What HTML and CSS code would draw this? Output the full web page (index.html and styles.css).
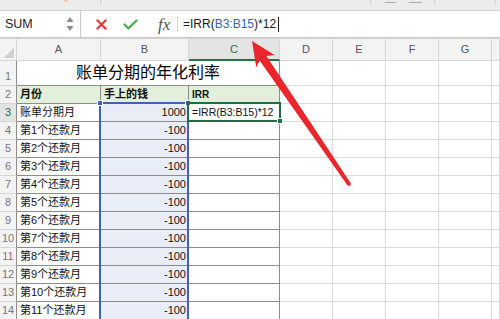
FILE: index.html
```html
<!DOCTYPE html>
<html lang="zh-CN">
<head>
  <meta charset="UTF-8" />
  <title>账单分期的年化利率</title>
  <link rel="stylesheet" href="styles.css">
</head>
<body>

  <div class="toolbar">
    <span class="tb-dot"></span>
    <span class="tb-sep s1"></span>
    <span class="tb-sep s2"></span>
    <span class="tb-dash d1"></span>
    <span class="tb-dash d2"></span>
    <span class="tb-sep s3"></span>
    <span class="tb-sep s4"></span>
  </div>

  <div class="formula-bar">
    <div class="name-box">
      <span>SUM</span>
      <svg class="spin" width="8" height="16" viewBox="0 0 8 16">
        <path d="M4 1 L7.5 6 L0.5 6 Z" fill="#8a8a8a"/>
        <path d="M4 15 L7.5 10 L0.5 10 Z" fill="#8a8a8a"/>
      </svg>
    </div>
    <div class="fb-tools">
      <svg class="x-icon" width="11" height="11" viewBox="0 0 11 11">
        <path d="M1.5 1.5 L9.5 9.5 M9.5 1.5 L1.5 9.5" stroke="#e0403a" stroke-width="2.4" stroke-linecap="round"/>
      </svg>
      <svg class="check-icon" width="15" height="11" viewBox="0 0 15 11">
        <path d="M1.5 5.5 L5.5 9.3 L13.5 1.5" stroke="#4fae57" stroke-width="2.4" fill="none" stroke-linecap="round" stroke-linejoin="round"/>
      </svg>
      <span class="fx">fx</span>
    </div>
    <div class="formula">=IRR(<span class="ref">B3:B15</span>)*12<span class="caret"></span></div>
  </div>

  <div class="sheet">
    <div class="row col-head">
      <div class="cell corner"><span class="tri"></span></div>
      <div class="cell">A</div>
      <div class="cell">B</div>
      <div class="cell active">C</div>
      <div class="cell">D</div>
      <div class="cell">E</div>
      <div class="cell">F</div>
      <div class="cell">G</div>
      <div class="cell"></div>
    </div>

    <div class="row title-row">
      <div class="cell rh">1</div>
      <div class="cell t title">账单分期的年化利率</div>
      <div class="cell"></div>
      <div class="cell"></div>
      <div class="cell"></div>
      <div class="cell"></div>
      <div class="cell"></div>
    </div>

    <div class="row">
      <div class="cell rh">2</div>
      <div class="cell t hd">月份</div>
      <div class="cell t hd">手上的钱</div>
      <div class="cell t hd small">IRR</div>
      <div class="cell"></div>
      <div class="cell"></div>
      <div class="cell"></div>
      <div class="cell"></div>
      <div class="cell"></div>
    </div>

    <div class="row">
      <div class="cell rh active">3</div>
      <div class="cell t">账单分期月</div>
      <div class="cell t num in-range">1000</div>
      <div class="cell t edit">=IRR(B3:B15)*12</div>
      <div class="cell"></div>
      <div class="cell"></div>
      <div class="cell"></div>
      <div class="cell"></div>
      <div class="cell"></div>
    </div>

    <div id="paymentRows"></div>

    <div class="range">
      <span class="handle blue tl"></span>
      <span class="handle blue tr"></span>
    </div>
    <div class="selected">
      <span class="handle green br"></span>
    </div>
  </div>

  <svg class="arrow" width="500" height="319" viewBox="0 0 500 319">
    <polygon points="252,41 274.5,55 266.4,56 350.6,183 347.4,185.2 259.6,60.4 256.3,67.5" fill="#e8262b"/>
    <circle cx="349" cy="184.1" r="1.8" fill="#e8262b"/>
  </svg>

  <script>
    // rows 4..14: 第N个还款月, -100
    const rowsBox = document.getElementById("paymentRows");
    for (let n = 1; n <= 11; n++) {
      const row = document.createElement("div");
      row.className = "row";
      row.innerHTML =
        `<div class="cell rh">${n + 3}</div>` +
        `<div class="cell t">第${n}个还款月</div>` +
        `<div class="cell t num in-range">-100</div>` +
        `<div class="cell t"></div>` +
        `<div class="cell"></div><div class="cell"></div>` +
        `<div class="cell"></div><div class="cell"></div><div class="cell"></div>`;
      rowsBox.appendChild(row);
    }
  </script>
</body>
</html>
```

FILE: styles.css
```css
* {
  margin: 0;
  padding: 0;
  box-sizing: border-box;
}

body {
  width: 500px;
  height: 319px;
  overflow: hidden;
  position: relative;
  background: #fff;
  font-family: "Liberation Sans", "Noto Sans CJK SC", sans-serif;
  color: #111;
}

/* top toolbar strip */
.toolbar {
  height: 11px;
  background: #ececec;
  border-bottom: 1px solid #cdcdcd;
  display: flex;
  align-items: flex-start;
}

.tb-dot {
  width: 4px;
  height: 2px;
  margin-left: 64px;
  background: #f2c9a0;
  border-radius: 2px;
}

.tb-sep {
  width: 1px;
  height: 5px;
  background: #cfcfcf;
}

.tb-sep.s1 { margin-left: 32px; }
.tb-sep.s2 { margin-left: 269px; }
.tb-sep.s3 { margin-left: 12px; }
.tb-sep.s4 { margin-left: 60px; }

.tb-dash {
  height: 1px;
  margin-top: 2px;
  background: #a9a9a9;
}

.tb-dash.d1 { width: 11px; margin-left: 14px; }
.tb-dash.d2 { width: 13px; margin-left: 13px; }

/* formula bar */
.formula-bar {
  height: 27px;
  display: flex;
  border-bottom: 1px solid #c8c8c8;
}

.name-box {
  width: 81px;
  border-right: 1px solid #c9c9c9;
  display: flex;
  align-items: center;
  padding-left: 5px;
  font-size: 12.5px;
  color: #222;
}

.spin {
  margin-left: auto;
  margin-right: 6px;
}

.fb-tools {
  width: 97px;
  margin: 5px 0;
  border-right: 1px solid #d2d2d2;
  display: flex;
  align-items: center;
  padding-left: 15px;
}

.check-icon {
  margin-left: 16px;
}

.fx {
  margin-left: 20px;
  font-family: "Liberation Serif", serif;
  font-style: italic;
  font-size: 17px;
  color: #555;
  line-height: 1;
}

.formula {
  display: flex;
  align-items: center;
  padding-left: 5px;
  font-size: 12px;
  color: #1a1a1a;
}

.formula .ref {
  color: #3a62b8;
}

.caret {
  width: 1px;
  height: 15px;
  margin-left: 2px;
  background: #222;
}

/* sheet grid */
.sheet {
  position: relative;
  height: 281px;
  overflow: hidden;
  border-top: 1px solid #d4d4d4;
}

.row {
  display: grid;
  grid-template-columns: 17px 84px 88px 91px 53px 53px 53px 53px 1fr;
  height: 18px;
}

.cell {
  border-right: 1px solid #dadada;
  border-bottom: 1px solid #dadada;
  font-size: 11px;
  line-height: 17px;
  padding: 0 3px;
  white-space: nowrap;
  overflow: hidden;
}

.cell.t {
  border-color: #8c8c8c;
}

.col-head {
  height: 22px;
  background: #f3f3f3;
}

.col-head .cell {
  border-color: #d6d6d6;
  text-align: center;
  line-height: 21px;
  color: #555;
}

.col-head .cell.active {
  background: #e4e4e4;
  color: #217346;
  border-bottom: 2px solid #217346;
}

.corner {
  display: flex;
  align-items: flex-end;
  justify-content: flex-end;
  padding: 2px;
}

.tri {
  width: 10px;
  height: 10px;
  background: linear-gradient(135deg, transparent 50%, #d2d2d2 50%);
}

.rh {
  background: #f3f3f3;
  color: #777;
  text-align: center;
  padding: 0;
  border-bottom-color: #d6d6d6;
  border-right-color: #8c8c8c;
}

.rh.active {
  color: #217346;
  background: #e4e4e4;
}

.title-row {
  height: 25px;
}

.title-row .rh {
  line-height: 30px;
}

.title {
  grid-column: span 3;
  text-align: center;
  font-size: 16px;
  line-height: 24px;
  color: #000;
}

.hd {
  background: #e2efda;
  font-weight: bold;
}

.hd.small {
  font-size: 10px;
}

.num {
  text-align: right;
  padding-right: 2px;
}

.in-range {
  background: #e9edf8;
}

.edit {
  font-size: 10.5px;
  padding-left: 3px;
}

/* formula reference + active cell */
.range {
  position: absolute;
  left: 99px;
  top: 63px;
  width: 90px;
  height: 230px;
  border: 2px solid #4162b0;
}

.selected {
  position: absolute;
  left: 187px;
  top: 63px;
  width: 94px;
  height: 20px;
  border: 2px solid #1f6e43;
}

.handle {
  position: absolute;
  width: 6px;
  height: 6px;
  border: 1px solid #fff;
}

.handle.blue { background: #4162b0; }
.handle.green { background: #1f6e43; }
.handle.tl { left: -4px; top: -4px; }
.handle.tr { right: -4px; top: -4px; }
.handle.br { right: -4px; bottom: -4px; }

.arrow {
  position: absolute;
  left: 0;
  top: 0;
  pointer-events: none;
}
```
